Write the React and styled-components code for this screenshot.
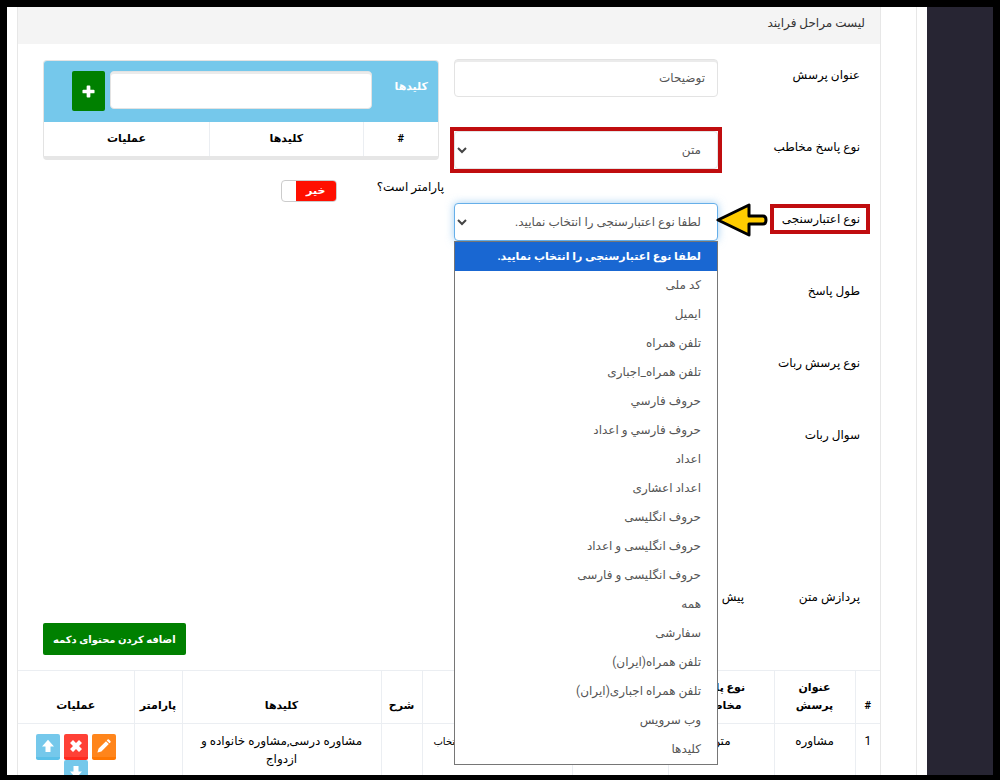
import styled, { createGlobalStyle, css } from "styled-components";
import { useState } from "react";


const GlobalStyle = createGlobalStyle`
    * {
        box-sizing: border-box;
    }
    body {
        margin: 0;
        background: #000;
        color: #000;
        font-family: Roboto, "DejaVu Sans", sans-serif;
        font-size: 12px;
        line-height: 18px;
    }
    input, select, button {
        font-family: inherit;
        font-size: inherit;
    }
`;

const Frame = styled.div`
    display: flex;
    height: 100vh;
    overflow: hidden;
    border: 7px solid #000;
    border-bottom-width: 5px;
    background: #fff;
`;

const Sidebar = styled.aside`
    flex: 0 0 66px;
    background: #272533;
`;

const Content = styled.main`
    flex: 1;
    min-width: 0;
    margin-right: 10px;
    padding: 0 35px 0 10px;
    border-right: 1px solid #e7e7e7;
`;

const Panel = styled.section`
    border: 1px solid #e7e7e7;
    border-width: 0 1px;
`;

const PanelTitle = styled.h1`
    margin: 0;
    padding: 7px 15px 12px;
    background: #f4f4f4;
    color: #333;
    font-size: 12px;
    font-weight: normal;
    line-height: 18px;
`;

const FormColumns = styled.div`
    display: grid;
    grid-template-columns: 406fr 396fr;
    gap: 15px;
    padding: 15px 20px 0 25px;
`;

const Fields = styled.div`
    display: flex;
    flex-direction: column;
    gap: 34px;
`;

const KeysColumn = styled.div`
    padding-top: 1px;
`;

const Field = styled.div`
    position: relative;
    display: grid;
    grid-template-columns: 142px minmax(0, 1fr);
    align-items: start;
    min-height: ${(props) => (props.$tall ? "128px" : "38px")};
`;

const LabelCell = styled.div`
    padding-top: 7px;
`;

const marked = css`
    outline: 4px solid #c00d0f;
`;

const Label = styled.label`
    ${(props) => props.$marked && css`
        ${marked}
        outline-offset: 4px;
        margin-right: -2px;
        padding: 0 2px 0 4px;
    `}
`;

const InlineNote = styled.span`
    margin: 7px -26px 0 0;
`;

const inputLook = css`
    display: block;
    width: 100%;
    height: 38px;
    border: 1px solid #e3e3e3;
    border-radius: 4px;
    background: #fff;
    box-shadow: inset 0 2px 0 #ebebeb;
    color: #555;
    outline: none;
`;

const TextInput = styled.input`
    ${inputLook}
    padding: 0 12px;
`;

const SelectWrap = styled.div`
    position: relative;
    ${(props) => props.$marked && marked}
`;

const Select = styled.select`
    ${inputLook}
    appearance: none;
    padding: 0 16px 0 24px;
    box-shadow: none;
    ${(props) => props.$open && css`
        border-color: #66afe9;
        box-shadow: 0 0 8px rgba(102, 175, 233, 0.6);
    `}
`;

const Chevron = styled.svg`
    position: absolute;
    left: 3px;
    top: 15px;
    pointer-events: none;
`;

const Menu = styled.ul`
    position: absolute;
    top: 100%;
    left: 0;
    right: 0;
    z-index: 2;
    margin: 0;
    padding: 0;
    list-style: none;
    border: 1px solid #767676;
    background: #fff;
`;

const MenuItem = styled.li`
    padding: 0 16px;
    color: ${(props) => (props.$active ? "#fff" : "#555")};
    background: ${(props) => (props.$active ? "#1967d2" : "#fff")};
    font-size: ${(props) => (props.$active ? "11px" : "12px")};
    font-weight: ${(props) => (props.$active ? "bold" : "normal")};
    line-height: 29px;
`;

const Arrow = styled.svg`
    position: absolute;
    right: 92px;
    top: 0;
    z-index: 3;
`;

const KeysBox = styled.div`
    border: 1px solid #e3e3e3;
    border-bottom: 4px solid #e6e6e6;
    border-radius: 4px;
    overflow: hidden;
`;

const KeysHeader = styled.div`
    display: flex;
    align-items: flex-start;
    height: 61px;
    padding: 10px 10px 0 28px;
    gap: 5px;
    background: #75c8eb;
    color: #fff;
`;

const KeysLabel = styled.label`
    flex: 0 0 51px;
    padding-top: 7px;
    font-size: 11px;
    font-weight: bold;
`;

const GreenButton = styled.button`
    display: inline-flex;
    align-items: center;
    justify-content: center;
    flex: none;
    border: 0;
    border-radius: 2px;
    background: #008000;
    color: #fff;
    font-weight: bold;
`;

const AddKey = styled(GreenButton)`
    width: 33px;
    height: 40px;
`;

const AddContent = styled(GreenButton)`
    height: 32px;
    padding: 0 10px;
    font-size: 10px;
`;

const Table = styled.table`
    width: 100%;
    border-collapse: collapse;
    table-layout: fixed;
    text-align: center;

    th, td {
        padding: 8px;
        border-left: 1px solid #ebeef2;
        overflow-wrap: normal;
    }
    th:last-child, td:last-child {
        border-left: 0;
    }
    th {
        vertical-align: bottom;
        font-size: 11px;
    }
    td {
        vertical-align: top;
    }
`;

const StepsTable = styled(Table)`
    margin-top: 15px;

    th, td {
        border-top: 1px solid #ebeef2;
        padding: 8px 4px;
    }
`;

const SwitchRow = styled.div`
    display: flex;
    gap: 40px;
    margin: 18px -5px 0 0;
`;

const Switch = styled.label`
    position: relative;
    display: flex;
    width: 56px;
    height: 22px;
    margin-top: 2px;
    overflow: hidden;
    border: 1px solid #ccc;
    border-radius: 4px;
    background: #fff;
    color: #fff;
    font-size: 11px;
    font-weight: bold;

    input {
        position: absolute;
        inset: 0;
        margin: 0;
        opacity: 0;
    }
    span {
        width: 40px;
        line-height: 20px;
        text-align: center;
        background: ${(props) => (props.$on ? "#008000" : "#ff0f00")};
    }
`;

const Footer = styled.div`
    display: flex;
    justify-content: flex-end;
    padding: 4px 0 0 25px;
`;

const Actions = styled.div`
    display: flex;
    flex-wrap: wrap;
    justify-content: center;
    gap: 0 4px;
    padding-top: 2px;
`;

const IconButton = styled.button`
    display: flex;
    align-items: center;
    justify-content: center;
    width: 24px;
    height: 26px;
    padding: 0;
    border: 0;
    border-bottom: 3px solid ${(props) => props.$edge};
    border-radius: 2px;
    background: ${(props) => props.$color};
`;

const Small = styled.span`
    font-size: 10px;
    white-space: nowrap;
`;

const validations = [
    "لطفا نوع اعتبارسنجی را انتخاب نمایید.",
    "کد ملی",
    "ایمیل",
    "تلفن همراه",
    "تلفن همراه_اجباری",
    "حروف فارسي",
    "حروف فارسي و اعداد",
    "اعداد",
    "اعداد اعشاری",
    "حروف انگلیسی",
    "حروف انگلیسی و اعداد",
    "حروف انگلیسی و فارسی",
    "همه",
    "سفارشی",
    "تلفن همراه(ایران)",
    "تلفن همراه اجباری(ایران)",
    "وب سرویس",
    "کلیدها",
];

const icons = {
    plus: "M5 1.500q0-1 1-1h2q1 0 1 1V5h3.500q1 0 1 1v2q0 1-1 1H9v3.500q0 1-1 1H6q-1 0-1-1V9H1.500q-1 0-1-1V6q0-1 1-1H5z",
    up: "M7 .8 13 7.500H9.500V13h-5V7.500H1z",
    down: "M7 13.200 1 6.500h3.500V1h5v5.500H13z",
    times: "M4 1 7 4l3-3L13 4l-3 3 3 3L10 13l-3-3-3 3L1 10l3-3-3-3z",
    pencil: "M9 2.200 11.800 5 4.400 12.400 .4 13.600l1.200-4zM9.700 1.500l.9-.9q.7-.6 1.300 0l1.500 1.500q.6.6 0 1.300l-.9.900z",
};

const Icon = ({ name, size = 14 }) => (
    <svg width={size} height={size} viewBox="0 0 14 14" fill="#fff" aria-hidden="true">
        <path d={icons[name]} />
    </svg>
);

const Caret = () => (
    <Chevron width="10" height="8" viewBox="0 0 10 8" fill="none" stroke="#444" strokeWidth="2" aria-hidden="true">
        <path d="M1 2l4 4 4-4" />
    </Chevron>
);


const App = () => {

    const [title, setTitle] = useState("توضیحات");
    const [key, setKey] = useState("");
    const [isParam, setIsParam] = useState(false);
    const [validation, setValidation] = useState(validations[0]);

    return (
        <>
        <GlobalStyle />
        <Frame dir="rtl">
            <Sidebar />
            <Content>
                <Panel>
                    <PanelTitle>لیست مراحل فرایند</PanelTitle>
                    <FormColumns>
                        <Fields>
                            <Field>
                                <LabelCell><Label htmlFor="title">عنوان پرسش</Label></LabelCell>
                                <TextInput id="title" value={title} onChange={e => setTitle(e.target.value)} />
                            </Field>
                            <Field>
                                <LabelCell><Label htmlFor="answer">نوع پاسخ مخاطب</Label></LabelCell>
                                <SelectWrap $marked>
                                    <Select id="answer"><option>متن</option></Select>
                                    <Caret />
                                </SelectWrap>
                            </Field>
                            <Field>
                                <LabelCell><Label htmlFor="validation" $marked>نوع اعتبارسنجی</Label></LabelCell>
                                <SelectWrap>
                                    <Select id="validation" $open value={validation} onChange={e => setValidation(e.target.value)}>
                                        {validations.map(v => <option key={v}>{v}</option>)}
                                    </Select>
                                    <Caret />
                                    <Menu>
                                        {validations.map(v => (
                                            <MenuItem key={v} $active={v === validation} onClick={() => setValidation(v)}>{v}</MenuItem>
                                        ))}
                                    </Menu>
                                </SelectWrap>
                                <Arrow width="52" height="34" viewBox="0 0 52 34" fill="#ffcc00" stroke="#000" strokeWidth="3" strokeLinejoin="round" aria-hidden="true">
                                    <path d="M2 17 33 2V13H47q3 0 3 4t-3 4H33V32z" />
                                </Arrow>
                            </Field>
                            <Field><LabelCell>طول پاسخ</LabelCell></Field>
                            <Field><LabelCell>نوع پرسش ربات</LabelCell></Field>
                            <Field $tall><LabelCell>سوال ربات</LabelCell></Field>
                            <Field>
                                <LabelCell>پردازش متن</LabelCell>
                                <InlineNote>پیش</InlineNote>
                            </Field>
                        </Fields>
                        <KeysColumn>
                            <KeysBox>
                                <KeysHeader>
                                    <KeysLabel htmlFor="key">کلیدها</KeysLabel>
                                    <TextInput id="key" value={key} onChange={e => setKey(e.target.value)} />
                                    <AddKey type="button" aria-label="افزودن"><Icon name="plus" size={13} /></AddKey>
                                </KeysHeader>
                                <Table>
                                    <colgroup>
                                        <col width="19%" />
                                        <col width="39%" />
                                        <col width="42%" />
                                    </colgroup>
                                    <thead>
                                        <tr><th>#</th><th>کلیدها</th><th>عملیات</th></tr>
                                    </thead>
                                </Table>
                            </KeysBox>
                            <SwitchRow>
                                <label htmlFor="param">پارامتر است؟</label>
                                <Switch $on={isParam}>
                                    <input id="param" type="checkbox" checked={isParam} onChange={e => setIsParam(e.target.checked)} />
                                    <span>{isParam ? "بله" : "خیر"}</span>
                                </Switch>
                            </SwitchRow>
                        </KeysColumn>
                    </FormColumns>
                    <Footer>
                        <AddContent type="button">اضافه کردن محتوای دکمه</AddContent>
                    </Footer>
                    <StepsTable>
                        <colgroup>
                            <col width="25" />
                            <col width="81" />
                            <col width="106" />
                            <col width="96" />
                            <col width="150" />
                            <col width="41" />
                            <col />
                            <col width="48" />
                            <col width="116" />
                        </colgroup>
                        <thead>
                            <tr>
                                <th>#</th>
                                <th>عنوان<br />پرسش</th>
                                <th>نوع پاسخ<br />مخاطب</th>
                                <th></th>
                                <th></th>
                                <th>شرح</th>
                                <th>کلیدها</th>
                                <th>پارامتر</th>
                                <th>عملیات</th>
                            </tr>
                        </thead>
                        <tbody>
                            <tr>
                                <td>1</td>
                                <td>مشاوره</td>
                                <td>متن</td>
                                <td></td>
                                <td><Small>لطفا نوع اعتبارسنجی را انتخاب</Small></td>
                                <td></td>
                                <td>مشاوره درسی,مشاوره خانواده و ازدواج</td>
                                <td></td>
                                <td>
                                    <Actions>
                                        <IconButton type="button" aria-label="ویرایش" $color="#ff851b" $edge="#ff7701"><Icon name="pencil" /></IconButton>
                                        <IconButton type="button" aria-label="حذف" $color="#ff4136" $edge="#ff2a1d"><Icon name="times" /></IconButton>
                                        <IconButton type="button" aria-label="بالا" $color="#75c8eb" $edge="#5bc0e8"><Icon name="up" /></IconButton>
                                        <IconButton type="button" aria-label="پایین" $color="#75c8eb" $edge="#5bc0e8"><Icon name="down" /></IconButton>
                                    </Actions>
                                </td>
                            </tr>
                        </tbody>
                    </StepsTable>
                </Panel>
            </Content>
        </Frame>
        </>
    )
}

export default App
